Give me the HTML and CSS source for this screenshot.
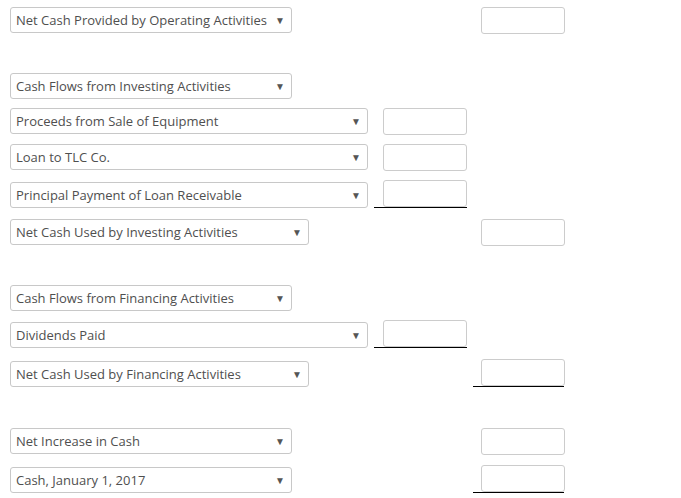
FILE: index.html
```html
<!DOCTYPE html>
<html>
<head>
<meta charset="utf-8">
<link rel="stylesheet" href="styles.css">
</head>
<body>
<div class="sheet">
  <div class="row">
    <div class="label"><div class="sel w1"><span>Net Cash Provided by Operating Activities</span><span class="arr">▼</span></div></div>
    <div class="amt"></div>
    <div class="amt c3"><div class="box"></div></div>
  </div>

  <div class="row sec">
    <div class="label"><div class="sel w1"><span>Cash Flows from Investing Activities</span><span class="arr">▼</span></div></div>
  </div>
  <div class="row">
    <div class="label"><div class="sel w3"><span>Proceeds from Sale of Equipment</span><span class="arr">▼</span></div></div>
    <div class="amt"><div class="box"></div></div>
  </div>
  <div class="row">
    <div class="label"><div class="sel w3"><span>Loan to TLC Co.</span><span class="arr">▼</span></div></div>
    <div class="amt"><div class="box"></div></div>
  </div>
  <div class="row ul">
    <div class="label"><div class="sel w3"><span>Principal Payment of Loan Receivable</span><span class="arr">▼</span></div></div>
    <div class="amt line"><div class="box"></div></div>
  </div>
  <div class="row">
    <div class="label"><div class="sel w2"><span>Net Cash Used by Investing Activities</span><span class="arr">▼</span></div></div>
    <div class="amt"></div>
    <div class="amt c3"><div class="box"></div></div>
  </div>

  <div class="row sec">
    <div class="label"><div class="sel w1"><span>Cash Flows from Financing Activities</span><span class="arr">▼</span></div></div>
  </div>
  <div class="row ul">
    <div class="label"><div class="sel w3"><span>Dividends Paid</span><span class="arr">▼</span></div></div>
    <div class="amt line"><div class="box"></div></div>
  </div>
  <div class="row ul">
    <div class="label"><div class="sel w2"><span>Net Cash Used by Financing Activities</span><span class="arr">▼</span></div></div>
    <div class="amt"></div>
    <div class="amt c3 line"><div class="box"></div></div>
  </div>

  <div class="row sec">
    <div class="label"><div class="sel w1"><span>Net Increase in Cash</span><span class="arr">▼</span></div></div>
    <div class="amt"></div>
    <div class="amt c3"><div class="box"></div></div>
  </div>
  <div class="row ul last">
    <div class="label"><div class="sel w1"><span>Cash, January 1, 2017</span><span class="arr">▼</span></div></div>
    <div class="amt"></div>
    <div class="amt c3 line"><div class="box"></div></div>
  </div>
</div>
</body>
</html>
```
FILE: styles.css
```css
html, body {
  margin: 0;
  padding: 0;
  background: #fff;
}
.sheet {
  display: flex;
  flex-direction: column;
  align-items: flex-start;
  padding: 7px 0 0 10px;
  font-family: "Open Sans", "Liberation Sans", sans-serif;
  font-size: 13px;
  color: #4f4f4f;
}
.row {
  display: flex;
  align-items: flex-start;
  margin-top: 9px;
}
.row:first-child { margin-top: 0; }
.row.sec { margin-top: 39px; }
.row.ul { align-items: flex-end; padding-bottom: 2px; }
.row.last { margin-top: 10px; }
.label {
  width: 364px;
  flex: none;
}
.sel {
  box-sizing: border-box;
  height: 26px;
  border: 1px solid #c8c8c8;
  border-radius: 3px;
  display: flex;
  align-items: center;
  justify-content: space-between;
  padding: 0 6px 0 5px;
  white-space: nowrap;
}
.w1 { width: 282px; }
.w2 { width: 299px; }
.w3 { width: 358px; }
.arr {
  font-size: 10px;
  color: #555;
}
.amt {
  box-sizing: border-box;
  width: 93px;
  padding-left: 9px;
  flex: none;
}
.amt.c3 {
  width: 91px;
  margin-left: 6px;
  padding-left: 8px;
}
.amt.line {
  border-bottom: 1px solid #000;
}
.box {
  box-sizing: border-box;
  width: 84px;
  height: 27px;
  border: 1px solid #ccc;
  border-radius: 3px;
}
```
